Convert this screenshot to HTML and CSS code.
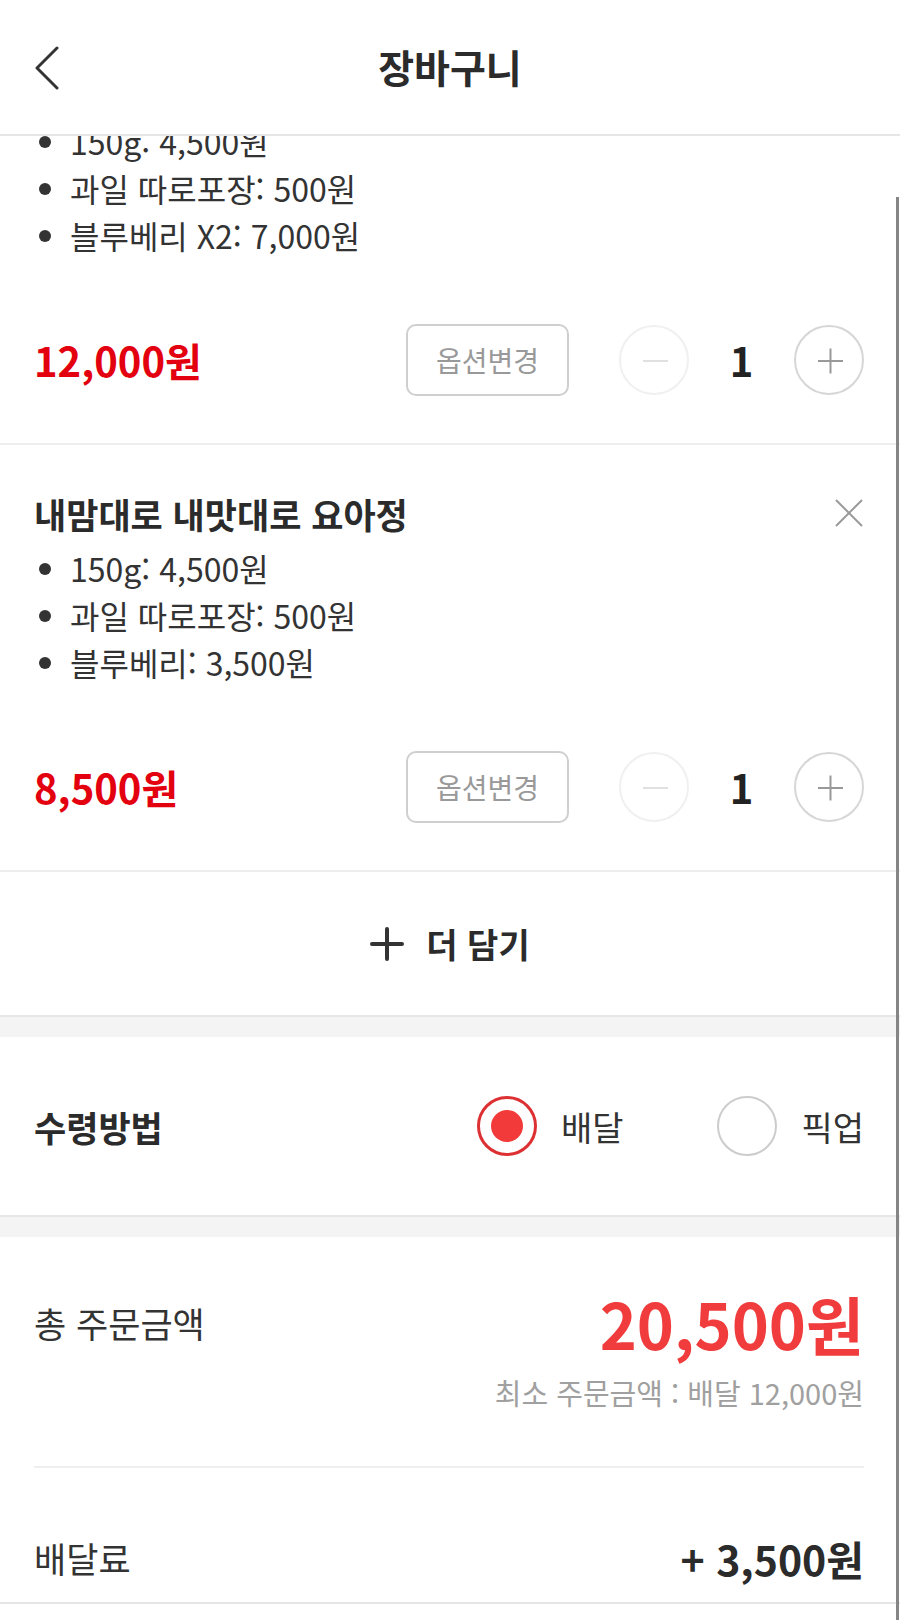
FILE: index.html
```html
<!DOCTYPE html>
<html lang="ko">

<head>
    <meta charset="utf-8" />
    <title>장바구니</title>
    <link rel="stylesheet" href="styles.css">
</head>

<body>
    <div class="page">
        <!-- top bar -->
        <header class="appbar">
            <button type="button" class="back" aria-label="뒤로">
                <svg width="26" height="44" viewBox="0 0 26 44">
                    <polyline points="23,2 3,22 23,42" fill="none" stroke="#333" stroke-width="3" stroke-linecap="round" stroke-linejoin="round" />
                </svg>
            </button>
            <h1>장바구니</h1>
            <span></span>
        </header>

        <div class="cart-scroll">
            <div class="cart-list">
                <!-- first item is scrolled, its name is under the bar -->
                <div class="item">
                    <ul class="options">
                        <li>150g: 4,500원</li>
                        <li>과일 따로포장: 500원</li>
                        <li>블루베리 X2: 7,000원</li>
                    </ul>
                    <div class="item-row">
                        <span class="price">12,000원</span>
                        <button type="button" class="opt-btn">옵션변경</button>
                        <div class="counter">
                            <span class="round minus"></span>
                            <span class="qty">1</span>
                            <span class="round plus"></span>
                        </div>
                    </div>
                </div>

                <div class="item">
                    <div class="item-head">
                        <h2>내맘대로 내맛대로 요아정</h2>
                        <svg class="close" width="30" height="30" viewBox="0 0 30 30">
                            <path d="M2 2 L28 28 M28 2 L2 28" stroke="#9a9a9a" stroke-width="2" />
                        </svg>
                    </div>
                    <ul class="options">
                        <li>150g: 4,500원</li>
                        <li>과일 따로포장: 500원</li>
                        <li>블루베리: 3,500원</li>
                    </ul>
                    <div class="item-row">
                        <span class="price">8,500원</span>
                        <button type="button" class="opt-btn">옵션변경</button>
                        <div class="counter">
                            <span class="round minus"></span>
                            <span class="qty">1</span>
                            <span class="round plus"></span>
                        </div>
                    </div>
                </div>
            </div>
        </div>

        <div class="add-more">
            <svg width="34" height="34" viewBox="0 0 34 34">
                <path d="M17 2 V32 M2 17 H32" stroke="#333" stroke-width="4" stroke-linecap="round" />
            </svg>
            <span>더 담기</span>
        </div>

        <div class="spacer"></div>

        <div class="receive">
            <h3>수령방법</h3>
            <div class="choices">
                <label class="choice">
                    <span class="radio on"></span>
                    배달
                </label>
                <label class="choice">
                    <span class="radio"></span>
                    픽업
                </label>
            </div>
        </div>

        <div class="spacer"></div>

        <div class="summary">
            <div class="total-row">
                <span class="label">총 주문금액</span>
                <div class="total-right">
                    <div class="total">20,500원</div>
                    <div class="min-order">최소 주문금액 : 배달 12,000원</div>
                </div>
            </div>
        </div>
        <div class="fee-row">
            <span class="label">배달료</span>
            <span class="fee">+ 3,500원</span>
        </div>

        <div class="scrollbar"></div>
    </div>
</body>

</html>
```

FILE: styles.css
```css
* {
    box-sizing: border-box;
}

body {
    margin: 0;
    font-family: "Noto Sans CJK KR", "Noto Sans", sans-serif;
    color: #333;
    background: #fff;
}

.page {
    position: relative;
    height: 1620px;
    overflow: hidden;
}

/* header */
.appbar {
    display: grid;
    grid-template-columns: 1fr auto 1fr;
    align-items: center;
    height: 136px;
    padding: 0 34px 2px;
    border-bottom: 2px solid #e6e6e6;
    background: #fff;
}

.appbar h1 {
    margin: 0;
    font-size: 39px;
    font-weight: 700;
    color: #2b2b2b;
}

.back {
    justify-self: start;
    border: 0;
    padding: 4px 0 0;
    background: none;
    display: flex;
}

/* cart items */
.cart-scroll {
    overflow: hidden;
}

.cart-list {
    margin-top: -62px;
}

.item {
    padding: 44px 36px 47px 34px;
    border-bottom: 2px solid #eeeeee;
}

.item-head {
    display: flex;
    justify-content: space-between;
    align-items: center;
    height: 48px;
    margin-bottom: 8px;
}

.item-head h2 {
    margin: 0;
    font-size: 35px;
    font-weight: 700;
    color: #2b2b2b;
}

.options {
    list-style: none;
    margin: 0;
    padding: 0;
    font-size: 32px;
    line-height: 47px;
    color: #333;
}

.options li {
    position: relative;
    padding-left: 36px;
}

.options li::before {
    content: "";
    position: absolute;
    left: 5px;
    top: 18px;
    width: 12px;
    height: 12px;
    border-radius: 50%;
    background: #333;
}

.item-row {
    display: flex;
    align-items: center;
    margin-top: 65px;
    height: 72px;
}

.price {
    flex: 1;
    font-size: 40px;
    font-weight: 700;
    color: #e3000f;
}

.opt-btn {
    width: 163px;
    height: 72px;
    border: 2px solid #cfcfcf;
    border-radius: 10px;
    background: #fff;
    font-family: inherit;
    font-size: 28px;
    color: #999;
    margin-right: 50px;
    padding: 0;
}

.counter {
    display: flex;
    align-items: center;
}

.round {
    position: relative;
    width: 70px;
    height: 70px;
    border-radius: 50%;
    border: 2px solid #d6d6d6;
}

.round::before,
.round::after {
    content: "";
    position: absolute;
    left: 22px;
    top: 33px;
    width: 25px;
    height: 2px;
    background: #999;
}

.plus::after {
    transform: rotate(90deg);
}

.minus {
    border-color: #f0f0f0;
}

.minus::before,
.minus::after {
    background: #e0e0e0;
}

.qty {
    width: 105px;
    text-align: center;
    font-size: 40px;
    font-weight: 700;
    color: #222;
}

/* add more */
.add-more {
    display: flex;
    justify-content: center;
    align-items: center;
    gap: 22px;
    height: 143px;
    font-size: 34px;
    font-weight: 700;
    color: #2b2b2b;
}

.spacer {
    height: 22px;
    background: #f4f4f4;
    border-top: 2px solid #e6e6e6;
}

/* receive method */
.receive {
    display: flex;
    justify-content: space-between;
    align-items: center;
    height: 178px;
    padding: 0 36px 0 34px;
}

.receive h3 {
    margin: 0;
    font-size: 35px;
    font-weight: 700;
    color: #2b2b2b;
}

.choices {
    display: flex;
    gap: 94px;
}

.choice {
    display: flex;
    align-items: center;
    gap: 24px;
    font-size: 34px;
    color: #333;
}

.radio {
    width: 60px;
    height: 60px;
    border-radius: 50%;
    border: 2px solid #cccccc;
    display: flex;
    justify-content: center;
    align-items: center;
}

.radio.on {
    border: 3px solid #dc3033;
}

.radio.on::before {
    content: "";
    width: 32px;
    height: 32px;
    border-radius: 50%;
    background: #f23a3a;
}

/* summary */
.summary {
    padding: 0 36px 0 34px;
}

.total-row {
    display: flex;
    justify-content: space-between;
    align-items: flex-start;
    padding: 46px 0 54px;
    border-bottom: 2px solid #efefef;
}

.label {
    font-size: 35px;
    line-height: 80px;
    color: #333;
}

.total-right {
    text-align: right;
}

.total {
    font-size: 63px;
    line-height: 80px;
    font-weight: 700;
    color: #f03c3c;
}

.min-order {
    margin-top: 9px;
    font-size: 29px;
    line-height: 40px;
    color: #a0a0a0;
}

.fee-row {
    display: flex;
    justify-content: space-between;
    align-items: center;
    padding: 50px 36px 4px 34px;
    border-bottom: 2px solid #e6e6e6;
}

.fee {
    font-size: 41px;
    font-weight: 700;
    color: #2b2b2b;
}

/* scroll indicator on the right edge */
.scrollbar {
    position: absolute;
    top: 197px;
    bottom: 0;
    right: 1px;
    width: 3px;
    background: #858585;
}
```
